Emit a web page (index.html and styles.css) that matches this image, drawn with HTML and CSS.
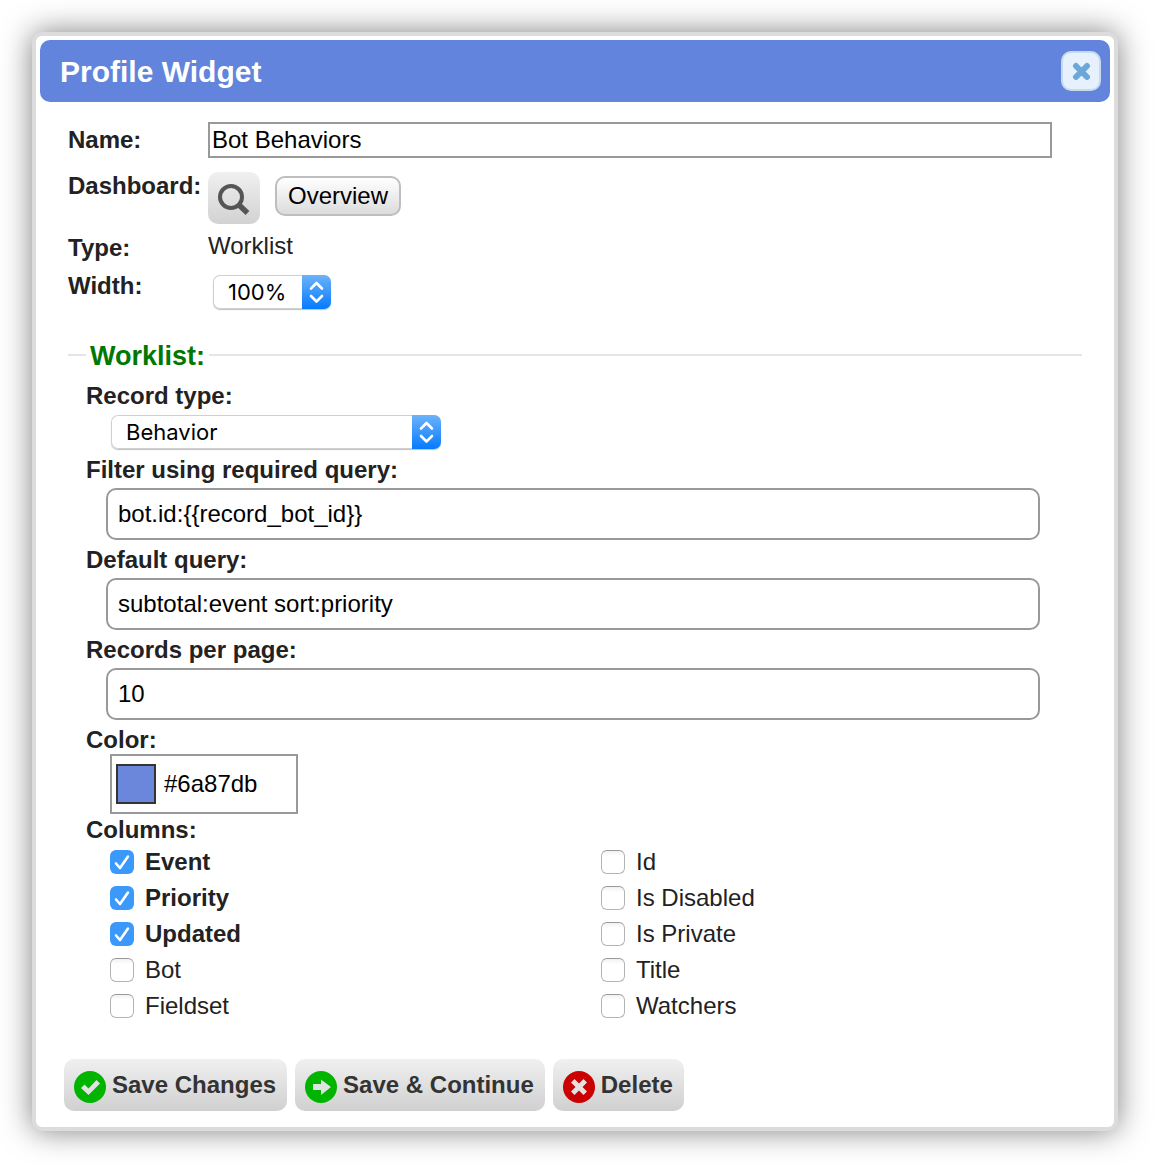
FILE: index.html
```html
<!DOCTYPE html>
<html lang="en">
<head>
<meta charset="utf-8">
<title>Profile Widget</title>
<link rel="stylesheet" href="styles.css">
</head>
<body>
<form class="dialog">
  <header class="titlebar">
    <h1 class="title">Profile Widget</h1>
    <button class="close" type="button" aria-label="Close">
      <svg width="20" height="20" viewBox="0 0 20 20"><path d="M5 5 16 16M16 5 5 16" fill="none" stroke="#6ba8d8" stroke-width="6" stroke-linecap="round"/></svg>
    </button>
  </header>

  <div class="content">
    <div class="row row-name">
      <label class="row-label" for="name">Name:</label>
      <input class="name-input" id="name" type="text" value="Bot Behaviors">
    </div>
    <div class="row row-dashboard">
      <span class="row-label">Dashboard:</span>
      <button class="search" type="button" aria-label="Search dashboards">
        <svg width="32" height="34" viewBox="0 0 32 34"><circle cx="13" cy="16" r="11" fill="none" stroke="#555" stroke-width="4"/><path d="M20.500 23.500 29.500 32" stroke="#555" stroke-width="5.500"/></svg>
      </button>
      <button class="bubble" type="button">Overview</button>
    </div>
    <div class="row row-type">
      <span class="row-label">Type:</span>
      <span class="row-value">Worklist</span>
    </div>
    <div class="row row-width">
      <label class="row-label" for="width">Width:</label>
      <div class="picker picker-narrow">
        <select class="select" id="width"><option>100%</option></select>
        <svg class="picker-arrows" width="29" height="34" viewBox="0 0 29 34"><path d="M9 13.500 14.500 8 20 13.500M9 21 14.500 26.500 20 21" fill="none" stroke="#fff" stroke-width="2.600" stroke-linecap="round" stroke-linejoin="round"/></svg>
      </div>
    </div>

    <fieldset class="group">
      <legend class="legend">Worklist:</legend>
      <div class="fields">
        <label class="label" for="record">Record type:</label>
        <div class="picker picker-wide">
          <select class="select" id="record"><option>Behavior</option></select>
          <svg class="picker-arrows" width="29" height="34" viewBox="0 0 29 34"><path d="M9 13.500 14.500 8 20 13.500M9 21 14.500 26.500 20 21" fill="none" stroke="#fff" stroke-width="2.600" stroke-linecap="round" stroke-linejoin="round"/></svg>
        </div>
        <label class="label" for="filter">Filter using required query:</label>
        <input class="input" id="filter" type="text" value="bot.id:{{record_bot_id}}">
        <label class="label" for="query">Default query:</label>
        <input class="input" id="query" type="text" value="subtotal:event sort:priority">
        <label class="label" for="pages">Records per page:</label>
        <input class="input" id="pages" type="text" value="10">
        <label class="label" for="color">Color:</label>
        <div class="color-field">
          <span class="swatch"></span>
          <input class="color-input" id="color" type="text" value="#6a87db">
        </div>
        <span class="label">Columns:</span>
        <div class="columns">
          <label class="check"><input class="box" type="checkbox" checked><b>Event</b></label>
          <label class="check"><input class="box" type="checkbox" checked><b>Priority</b></label>
          <label class="check"><input class="box" type="checkbox" checked><b>Updated</b></label>
          <label class="check"><input class="box" type="checkbox"><span>Bot</span></label>
          <label class="check"><input class="box" type="checkbox"><span>Fieldset</span></label>
          <label class="check"><input class="box" type="checkbox"><span>Id</span></label>
          <label class="check"><input class="box" type="checkbox"><span>Is Disabled</span></label>
          <label class="check"><input class="box" type="checkbox"><span>Is Private</span></label>
          <label class="check"><input class="box" type="checkbox"><span>Title</span></label>
          <label class="check"><input class="box" type="checkbox"><span>Watchers</span></label>
        </div>
      </div>
    </fieldset>
  </div>

  <footer class="actions">
    <button class="action" type="button">
      <svg class="action-icon" width="32" height="32" viewBox="0 0 32 32"><circle cx="16" cy="16" r="16" fill="#00b400"/><path d="M7 17 10.500 13.500 14.500 17.500 22.500 9 26 12.500 14.500 24Z" fill="#e2e2e2"/></svg>
      <span>Save Changes</span>
    </button>
    <button class="action" type="button">
      <svg class="action-icon" width="32" height="32" viewBox="0 0 32 32"><circle cx="16" cy="16" r="16" fill="#00b400"/><path d="M8 13H16V8.500L26 16 16 24V19H8Z" fill="#e2e2e2"/></svg>
      <span>Save &amp; Continue</span>
    </button>
    <button class="action" type="button">
      <svg class="action-icon" width="32" height="32" viewBox="0 0 32 32"><circle cx="16" cy="16" r="16" fill="#cb0000"/><path d="M11.500 8 16 12.500 20.500 8 24 11.500 19.500 16 24 20.500 20.500 24 16 19.500 11.500 24 8 20.500 12.500 16 8 11.500Z" fill="#e2e2e2"/></svg>
      <span>Delete</span>
    </button>
  </footer>
</form>
</body>
</html>
```
FILE: styles.css
```css
* { box-sizing: border-box; }

body {
  margin: 0;
  padding: 32px 38px 36px 32px;
  background: #fff;
  color: #222;
  font: 24px/28px "Liberation Sans", Arial, Helvetica, sans-serif;
}

button, input, select { font: inherit; color: #000; margin: 0; }
button { padding: 0; border: 0; cursor: pointer; }

.dialog {
  padding: 4px 4px 16px;
  border: 4px solid #dcdcdc;
  border-radius: 10px;
  background: #fff;
  box-shadow: 0 0 30px rgba(0, 0, 0, 0.5);
}

.titlebar {
  display: flex;
  align-items: center;
  justify-content: space-between;
  height: 62px;
  padding: 0 9px 0 20px;
  border-radius: 10px;
  background: #6284dc;
}
.title { margin: 0; padding-top: 2px; color: #fff; font-size: 30px; line-height: 34px; }
.close {
  display: flex;
  align-items: center;
  justify-content: center;
  width: 40px;
  height: 40px;
  border: 2px solid #c5dbec;
  border-radius: 10px;
  background: #e6f1fd;
}

.content { padding: 20px 28px 0; }
.row { display: flex; align-items: flex-start; }
.row-label { flex: none; width: 140px; font-weight: bold; }
.row-name { align-items: center; height: 36px; padding-right: 30px; margin-bottom: 14px; }
.name-input {
  flex: 1;
  min-width: 0;
  height: 36px;
  padding: 0 2px;
  border: 2px solid #999;
  background: #fff;
}
.row-dashboard { height: 62px; }
.search {
  display: flex;
  align-items: center;
  justify-content: center;
  width: 52px;
  height: 52px;
  border-radius: 10px;
  background: linear-gradient(#f0f0f0, #d2d2d2);
}
.bubble {
  height: 40px;
  margin: 4px 0 0 15px;
  padding: 0 11px;
  border: 2px solid #bebebe;
  border-radius: 10px;
  background: linear-gradient(#fff, #dcdcdc);
}
.row-type { height: 38px; }
.row-value { line-height: 24px; }
.row-width { height: 68px; }
.row-width .picker { margin: 3px 0 0 5px; }

.picker {
  display: flex;
  height: 34px;
  border-radius: 7px;
  background: #fff;
  box-shadow: inset 0 0 0 1px #d0d0d0, 0 1px 1px rgba(0, 0, 0, 0.25);
  overflow: hidden;
}
.picker-narrow { width: 118px; }
.picker-wide { width: 330px; margin: 5px 0 7px 25px; }
.select {
  flex: 1;
  min-width: 0;
  padding: 0 0 0 15px;
  border: 0;
  background: none;
  appearance: none;
  font-family: Inter, "Liberation Sans", sans-serif;
  font-size: 22px;
}
.picker-arrows { flex: none; background: linear-gradient(#6cb3fa, #067aff); }

.group {
  min-width: 0;
  margin: 0;
  padding: 12px 0 0;
  border: 0;
  border-top: 2px solid #e5e5e5;
}
.legend {
  margin-left: 18px;
  padding: 2px 4px 0;
  color: #007800;
  font-size: 27px;
  line-height: 28px;
  font-weight: bold;
}
.fields { display: flex; flex-direction: column; align-items: flex-start; padding-left: 18px; }
.label { font-weight: bold; }
.input {
  align-self: stretch;
  height: 52px;
  margin: 4px 42px 6px 20px;
  padding: 0 10px;
  border: 2px solid #999;
  border-radius: 10px;
  background: #fff;
}
.color-field {
  display: flex;
  align-items: center;
  gap: 8px;
  width: 188px;
  height: 60px;
  margin: 0 0 2px 24px;
  padding: 0 4px;
  border: 2px solid #999;
}
.swatch { flex: none; width: 40px; height: 40px; border: 2px solid #333; background: #6a87db; }
.color-input { flex: 1; min-width: 0; padding: 0; border: 0; background: none; }

.columns {
  display: grid;
  grid-template-rows: repeat(5, 36px);
  grid-auto-flow: column;
  grid-auto-columns: 1fr;
  column-gap: 10px;
  align-self: stretch;
  padding-left: 24px;
}
.check { display: flex; align-items: center; gap: 11px; }
.box {
  flex: none;
  width: 24px;
  height: 24px;
  margin: 0;
  appearance: none;
  border: 1px solid #b4b4b4;
  border-top-color: #999;
  border-radius: 6px;
  background: linear-gradient(#f1f1f1, #fff 5px);
}
.box:checked {
  border: 0;
  background: #3b99fc url("data:image/svg+xml,%3Csvg xmlns='http://www.w3.org/2000/svg' viewBox='0 0 24 24'%3E%3Cpath d='M6 13.500 10 18 18 6.500' fill='none' stroke='white' stroke-width='2.600' stroke-linecap='round' stroke-linejoin='round'/%3E%3C/svg%3E");
}

.actions { display: flex; gap: 8px; padding: 35px 24px 0; }
.action {
  display: flex;
  align-items: center;
  gap: 6px;
  height: 52px;
  padding: 0 11px 0 10px;
  border-radius: 10px;
  background: linear-gradient(#f0f0f0, #d0d0d0);
  color: #333;
  font-weight: bold;
}
.action-icon { margin-top: 4px; }
```
